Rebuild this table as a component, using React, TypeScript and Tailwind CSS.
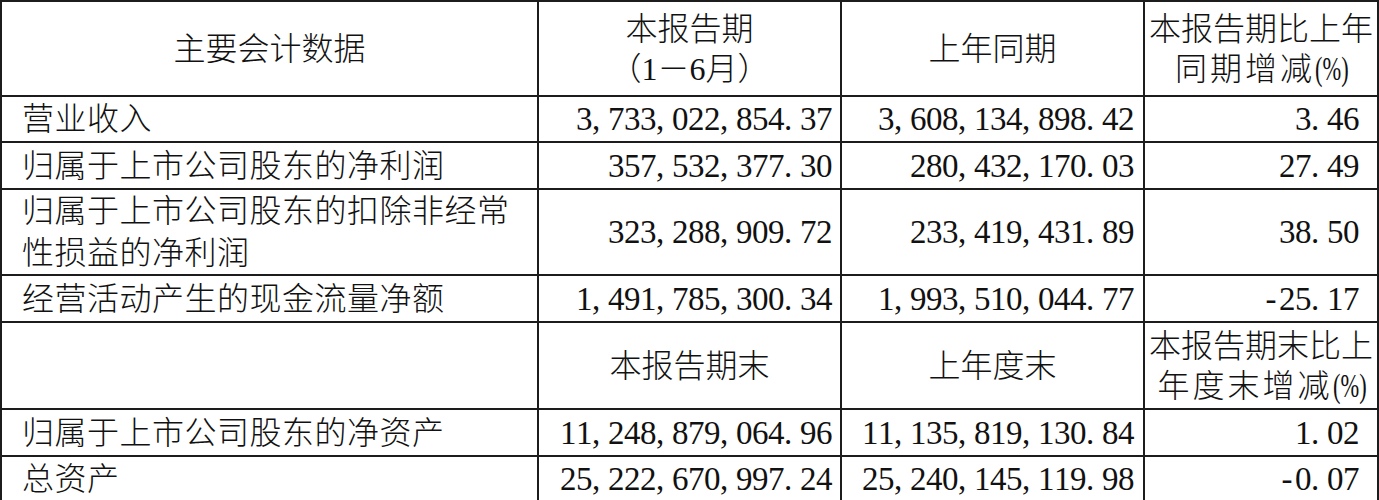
import React from "react";

type Row = { label: string[]; a: string; b: string; c: string; h: string };

const Num = ({ v }: { v: string }) => (
  <span className="whitespace-nowrap">
    {v.split("").map((ch, i) =>
      ch === "," || ch === "." ? (
        <span key={i} className="inline-block w-[16px] text-left">
          {ch}
        </span>
      ) : (
        <span key={i} className="inline-block w-[16px] text-center">
          {ch}
        </span>
      )
    )}
  </span>
);

const Pct = () => (
  <span className="inline-block w-[32px] text-left align-baseline text-[34px]">
    <span className="inline-block origin-left [transform:scaleX(0.66)]">(%)</span>
  </span>
);

const rowsTop: Row[] = [
  { label: ["营业收入"], a: "3,733,022,854.37", b: "3,608,134,898.42", c: "3.46", h: "h-[46px]" },
  { label: ["归属于上市公司股东的净利润"], a: "357,532,377.30", b: "280,432,170.03", c: "27.49", h: "h-[47px]" },
  {
    label: ["归属于上市公司股东的扣除非经常", "性损益的净利润"],
    a: "323,288,909.72",
    b: "233,419,431.89",
    c: "38.50",
    h: "h-[85px]",
  },
  { label: ["经营活动产生的现金流量净额"], a: "1,491,785,300.34", b: "1,993,510,044.77", c: "-25.17", h: "h-[47px]" },
];

const rowsBottom: Row[] = [
  { label: ["归属于上市公司股东的净资产"], a: "11,248,879,064.96", b: "11,135,819,130.84", c: "1.02", h: "h-[47px]" },
  { label: ["总资产"], a: "25,222,670,997.24", b: "25,240,145,119.98", c: "-0.07", h: "h-[45px]" },
];

const cell = "border-2 border-[#1c1c1c] p-0 align-middle";

const DataRow = ({ r }: { r: Row }) => (
  <tr>
    <td className={`${cell} ${r.h} pl-[20px] text-left leading-[42px] tracking-[0.5px]`}>
      {r.label.map((l, i) => (
        <div key={i}>{l}</div>
      ))}
    </td>
    <td className={`${cell} ${r.h} pr-[8px] text-right text-[33px] leading-[34px]`}>
      <Num v={r.a} />
    </td>
    <td className={`${cell} ${r.h} pr-[9px] text-right text-[33px] leading-[34px]`}>
      <Num v={r.b} />
    </td>
    <td className={`${cell} ${r.h} pr-[18px] text-right text-[33px] leading-[34px]`}>
      <Num v={r.c} />
    </td>
  </tr>
);

export default function App() {
  return (
    <div className="w-[1379px] h-[500px] bg-white overflow-hidden text-[#111] font-['Liberation_Serif','Noto_Sans_CJK_SC',serif] font-light text-[32px] leading-[36px]">
      <table className="border-collapse table-fixed w-[1377px]">
        <colgroup>
          <col className="w-[537px]" />
          <col className="w-[303px]" />
          <col className="w-[303px]" />
          <col className="w-[234px]" />
        </colgroup>
        <tbody>
          <tr>
            <td className={`${cell} h-[95px] text-center`}>主要会计数据</td>
            <td className={`${cell} h-[95px] text-center leading-[40px]`}>
              <div>本报告期</div>
              <div>（1－6月）</div>
            </td>
            <td className={`${cell} h-[95px] text-center`}>上年同期</td>
            <td className={`${cell} h-[95px] text-center leading-[40px] whitespace-nowrap`}>
              <div>本报告期比上年</div>
              <div>
                <span className="tracking-[3px]">同期增减</span>
                <Pct />
              </div>
            </td>
          </tr>
          {rowsTop.map((r, i) => (
            <DataRow key={i} r={r} />
          ))}
          <tr>
            <td className={`${cell} h-[87px]`}></td>
            <td className={`${cell} h-[87px] text-center`}>本报告期末</td>
            <td className={`${cell} h-[87px] text-center`}>上年度末</td>
            <td className={`${cell} h-[87px] text-center leading-[40px] whitespace-nowrap`}>
              <div>本报告期末比上</div>
              <div>
                <span className="tracking-[3px]">年度末增减</span>
                <Pct />
              </div>
            </td>
          </tr>
          {rowsBottom.map((r, i) => (
            <DataRow key={i} r={r} />
          ))}
        </tbody>
      </table>
    </div>
  );
}
